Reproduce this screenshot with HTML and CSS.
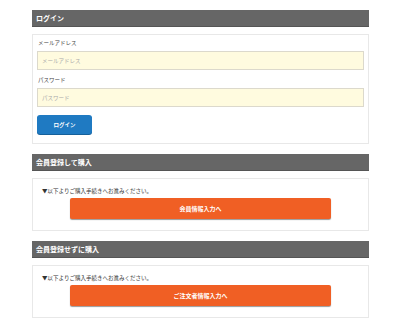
FILE: index.html
```html
<!DOCTYPE html>
<html lang="ja">
<head>
<meta charset="utf-8">
<link rel="stylesheet" href="styles.css">
</head>
<body>
<div class="page">
  <section class="block">
    <h2 class="block-title">ログイン</h2>
    <div class="panel login">
      <label class="field-label">メールアドレス</label>
      <input class="field" type="text" placeholder="メールアドレス">
      <label class="field-label">パスワード</label>
      <input class="field" type="password" placeholder="パスワード">
      <button class="btn-login">ログイン</button>
    </div>
  </section>
  <section class="block">
    <h2 class="block-title">会員登録して購入</h2>
    <div class="panel buy">
      <p class="note">▼以下よりご購入手続きへお進みください。</p>
      <button class="btn-order">会員情報入力へ</button>
    </div>
  </section>
  <section class="block">
    <h2 class="block-title">会員登録せずに購入</h2>
    <div class="panel buy">
      <p class="note">▼以下よりご購入手続きへお進みください。</p>
      <button class="btn-order">ご注文者情報入力へ</button>
    </div>
  </section>
</div>
</body>
</html>
```
FILE: styles.css
```css
* { box-sizing: border-box; }
html, body { margin: 0; padding: 0; background: #fff; }
body {
  font-family: "Noto Sans CJK JP", "Noto Sans", sans-serif;
  color: #333;
}
.page {
  width: 337px;
  margin-left: 32px;
  padding-top: 10px;
  display: flex;
  flex-direction: column;
  gap: 10px;
}
.block { display: flex; flex-direction: column; gap: 7px; }
.block-title {
  margin: 0;
  height: 17px;
  background: #666;
  border-bottom: 1px solid #555;
  color: #fff;
  font-size: 7px;
  font-weight: bold;
  line-height: 16px;
  padding-left: 4px;
}
.panel {
  border: 1px solid #e8e8e8;
  background: #fff;
}
.login {
  display: flex;
  flex-direction: column;
  padding: 4px 4px 9px 4px;
}
.field-label {
  font-size: 5.5px;
  line-height: 8px;
  height: 8px;
  margin: 0 0 4px 1px;
  color: #444;
}
.field {
  height: 19px;
  width: 100%;
  background: #fffbdf;
  border: 1px solid #dcd9cc;
  font-family: inherit;
  font-size: 5.5px;
  padding: 0 4px;
  margin: 0 0 6px 0;
  outline: none;
}
.field::placeholder { color: #aaa; }
.btn-login {
  width: 55px;
  height: 19px;
  margin: 2px 0 0 0;
  border: none;
  border-radius: 3px;
  background: #1f7ac2;
  box-shadow: 0 1px 0 #15609a;
  color: #fff;
  font-family: inherit;
  font-size: 5.5px;
  font-weight: bold;
}
.buy {
  display: flex;
  flex-direction: column;
  align-items: center;
  padding: 8px 0 11px 0;
}
.note {
  align-self: flex-start;
  margin: 0 0 3px 9px;
  font-size: 5.5px;
  line-height: 8px;
  height: 8px;
  color: #333;
}
.btn-order {
  width: 261px;
  height: 21px;
  border: none;
  border-radius: 2px;
  background: #f05f24;
  box-shadow: 0 1px 1px #999;
  color: #fff;
  font-family: inherit;
  font-size: 6px;
  font-weight: bold;
}
```
